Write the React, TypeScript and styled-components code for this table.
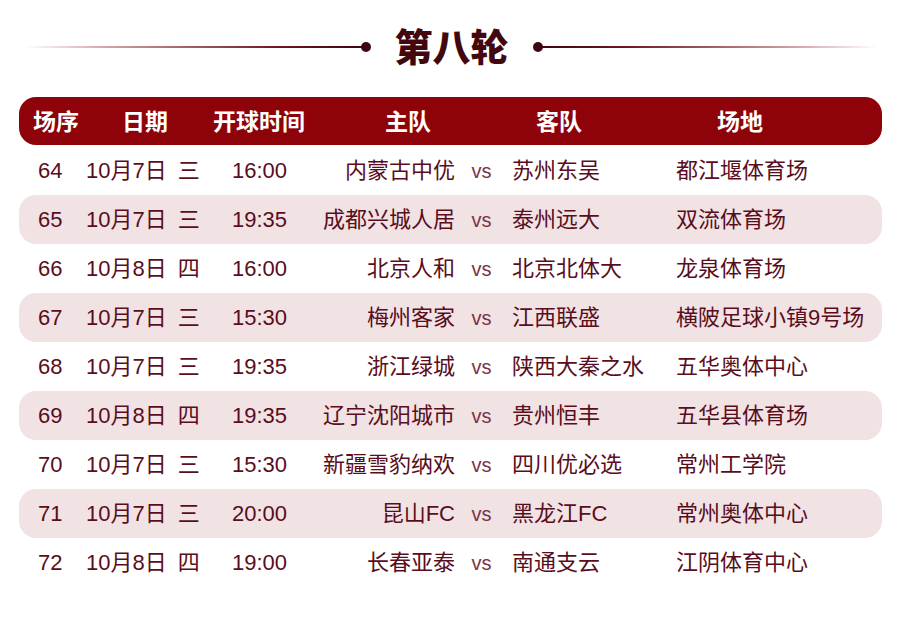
import React from "react";
import styled, { createGlobalStyle } from "styled-components";

const GlobalStyle = createGlobalStyle`
  html, body {
    margin: 0;
    padding: 0;
    background: #ffffff;
  }
  body {
    font-family: "Liberation Sans", "Noto Sans CJK SC", sans-serif;
  }
`;

const Page = styled.div`
  width: 900px;
  height: 627px;
  background: #ffffff;
  overflow: hidden;
`;

const TitleRow = styled.div`
  height: 94px;
  display: flex;
  align-items: center;
  gap: 28px;
  padding: 0 22px 0 25px;
  box-sizing: border-box;
`;

const Line = styled.div<{ $side: "left" | "right" }>`
  position: relative;
  flex: 1;
  height: 2px;
  background: ${(p) =>
    p.$side === "left"
      ? "linear-gradient(to right, rgba(150,60,70,0) 0%, rgba(170,80,90,0.55) 25%, #6a1420 75%, #3e0610 100%)"
      : "linear-gradient(to left, rgba(150,60,70,0) 0%, rgba(170,80,90,0.55) 25%, #6a1420 75%, #3e0610 100%)"};
  &::after {
    content: "";
    position: absolute;
    top: 50%;
    ${(p) => (p.$side === "left" ? "right: -4px;" : "left: -4px;")}
    width: 10px;
    height: 10px;
    margin-top: -5px;
    border-radius: 50%;
    background: #3e0610;
  }
`;

const Title = styled.h1`
  margin: 0;
  font-family: "Noto Sans CJK SC", sans-serif;
  font-size: 38px;
  font-weight: 900;
  line-height: 1;
  color: #43080f;
  letter-spacing: 0;
  padding-bottom: 5px;
`;

const Table = styled.div`
  margin: 3px 18px 0 19px;
  display: flex;
  flex-direction: column;
`;

const HeaderBar = styled.div`
  height: 48px;
  border-radius: 17px;
  background: #8e0309;
  display: grid;
  grid-template-columns: 74px 104px 124px 174px 128px 234px 1fr;
  align-items: center;
  margin-bottom: 1px;
`;

const HeadCell = styled.div`
  text-align: center;
  color: #ffffff;
  font-family: "Noto Sans CJK SC", sans-serif;
  font-weight: 700;
  font-size: 23px;
  line-height: 1;
  padding-bottom: 2px;
`;

const Row = styled.div<{ $striped: boolean }>`
  height: 49px;
  border-radius: 17px;
  background: ${(p) => (p.$striped ? "#f1e2e4" : "transparent")};
  display: grid;
  grid-template-columns: 48px 146px 78px 145px 57px 164px 1fr;
  align-items: center;
  padding-left: 19px;
  color: #5a0d1c;
  font-size: 22px;
  line-height: 1;
  white-space: nowrap;
`;

const Cell = styled.div<{ $align?: "left" | "right" | "center" }>`
  text-align: ${(p) => p.$align ?? "left"};
`;

const Weekday = styled.span`
  margin-left: 11px;
`;

const Versus = styled.div`
  text-align: center;
  font-size: 20px;
  color: #7a3347;
  padding-right: 4px;
`;

type Match = {
  no: number;
  date: string;
  weekday: string;
  time: string;
  home: string;
  away: string;
  venue: string;
};

const matches: Match[] = [
  { no: 64, date: "10月7日", weekday: "三", time: "16:00", home: "内蒙古中优", away: "苏州东吴", venue: "都江堰体育场" },
  { no: 65, date: "10月7日", weekday: "三", time: "19:35", home: "成都兴城人居", away: "泰州远大", venue: "双流体育场" },
  { no: 66, date: "10月8日", weekday: "四", time: "16:00", home: "北京人和", away: "北京北体大", venue: "龙泉体育场" },
  { no: 67, date: "10月7日", weekday: "三", time: "15:30", home: "梅州客家", away: "江西联盛", venue: "横陂足球小镇9号场" },
  { no: 68, date: "10月7日", weekday: "三", time: "19:35", home: "浙江绿城", away: "陕西大秦之水", venue: "五华奥体中心" },
  { no: 69, date: "10月8日", weekday: "四", time: "19:35", home: "辽宁沈阳城市", away: "贵州恒丰", venue: "五华县体育场" },
  { no: 70, date: "10月7日", weekday: "三", time: "15:30", home: "新疆雪豹纳欢", away: "四川优必选", venue: "常州工学院" },
  { no: 71, date: "10月7日", weekday: "三", time: "20:00", home: "昆山FC", away: "黑龙江FC", venue: "常州奥体中心" },
  { no: 72, date: "10月8日", weekday: "四", time: "19:00", home: "长春亚泰", away: "南通支云", venue: "江阴体育中心" },
];

const headers = ["场序", "日期", "开球时间", "主队", "客队", "场地"];

export default function App() {
  return (
    <Page>
      <GlobalStyle />
      <TitleRow>
        <Line $side="left" />
        <Title>第八轮</Title>
        <Line $side="right" />
      </TitleRow>
      <Table>
        <HeaderBar>
          {headers.map((h) => (
            <HeadCell key={h}>{h}</HeadCell>
          ))}
        </HeaderBar>
        {matches.map((m, i) => (
          <Row key={m.no} $striped={i % 2 === 1}>
            <Cell>{m.no}</Cell>
            <Cell>
              {m.date}
              <Weekday>{m.weekday}</Weekday>
            </Cell>
            <Cell>{m.time}</Cell>
            <Cell $align="right">{m.home}</Cell>
            <Versus>vs</Versus>
            <Cell>{m.away}</Cell>
            <Cell>{m.venue}</Cell>
          </Row>
        ))}
      </Table>
    </Page>
  );
}
